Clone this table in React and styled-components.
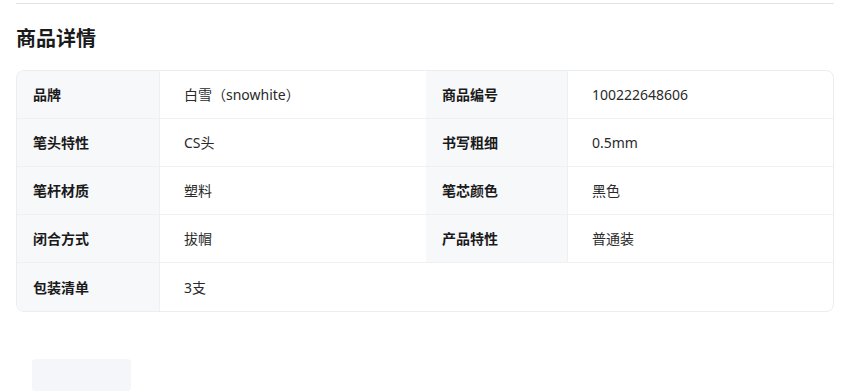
import styled, { createGlobalStyle } from "styled-components";

const GlobalStyle = createGlobalStyle`
  html, body {
    margin: 0;
    padding: 0;
    background: #ffffff;
    font-family: "Noto Sans", "Noto Sans CJK SC", sans-serif;
    color: #222;
  }
`;

const Page = styled.div`
  padding: 3px 13px 0 16px;
`;

const Divider = styled.div`
  height: 1px;
  background: #e3e3e3;
`;

const Title = styled.h2`
  margin: 21px 0 17px;
  font-size: 20px;
  line-height: 28px;
  font-weight: 700;
  color: #1a1a1a;
`;

const Table = styled.div`
  display: grid;
  grid-template-columns: 143px 266px 142px 1fr;
  border: 1px solid #ebedf0;
  border-radius: 8px;
  overflow: hidden;
`;

const Label = styled.div`
  background: #f7f8fa;
  border-right: 1px solid #eef0f2;
  border-bottom: ${(p) => (p.$last ? "none" : "1px solid #eef0f2")};
  padding: 0 16px 1px;
  height: 48px;
  box-sizing: border-box;
  display: flex;
  align-items: center;
  font-size: 14px;
  font-weight: 700;
  color: #1a1a1a;
`;

const Value = styled.div`
  grid-column: ${(p) => (p.$wide ? "span 3" : "auto")};
  border-bottom: ${(p) => (p.$last ? "none" : "1px solid #eef0f2")};
  padding: 0 24px 1px;
  height: 48px;
  box-sizing: border-box;
  display: flex;
  align-items: center;
  font-size: 14px;
  color: #2a2a2a;
`;

const Placeholder = styled.div`
  margin: 47px 0 0 16px;
  width: 99px;
  height: 32px;
  border-radius: 4px;
  background: #f5f6fa;
`;

const rows = [
  ["品牌", "白雪（snowhite）", "商品编号", "100222648606"],
  ["笔头特性", "CS头", "书写粗细", "0.5mm"],
  ["笔杆材质", "塑料", "笔芯颜色", "黑色"],
  ["闭合方式", "拔帽", "产品特性", "普通装"],
];

export default function App() {
  return (
    <Page>
      <GlobalStyle />
      <Divider />
      <Title>商品详情</Title>
      <Table>
        {rows.map(([l1, v1, l2, v2]) => [
          <Label key={l1}>{l1}</Label>,
          <Value key={l1 + "v"}>{v1}</Value>,
          <Label key={l2}>{l2}</Label>,
          <Value key={l2 + "v"}>{v2}</Value>,
        ])}
        <Label $last>包装清单</Label>
        <Value $last $wide>
          3支
        </Value>
      </Table>
      <Placeholder />
    </Page>
  );
}
